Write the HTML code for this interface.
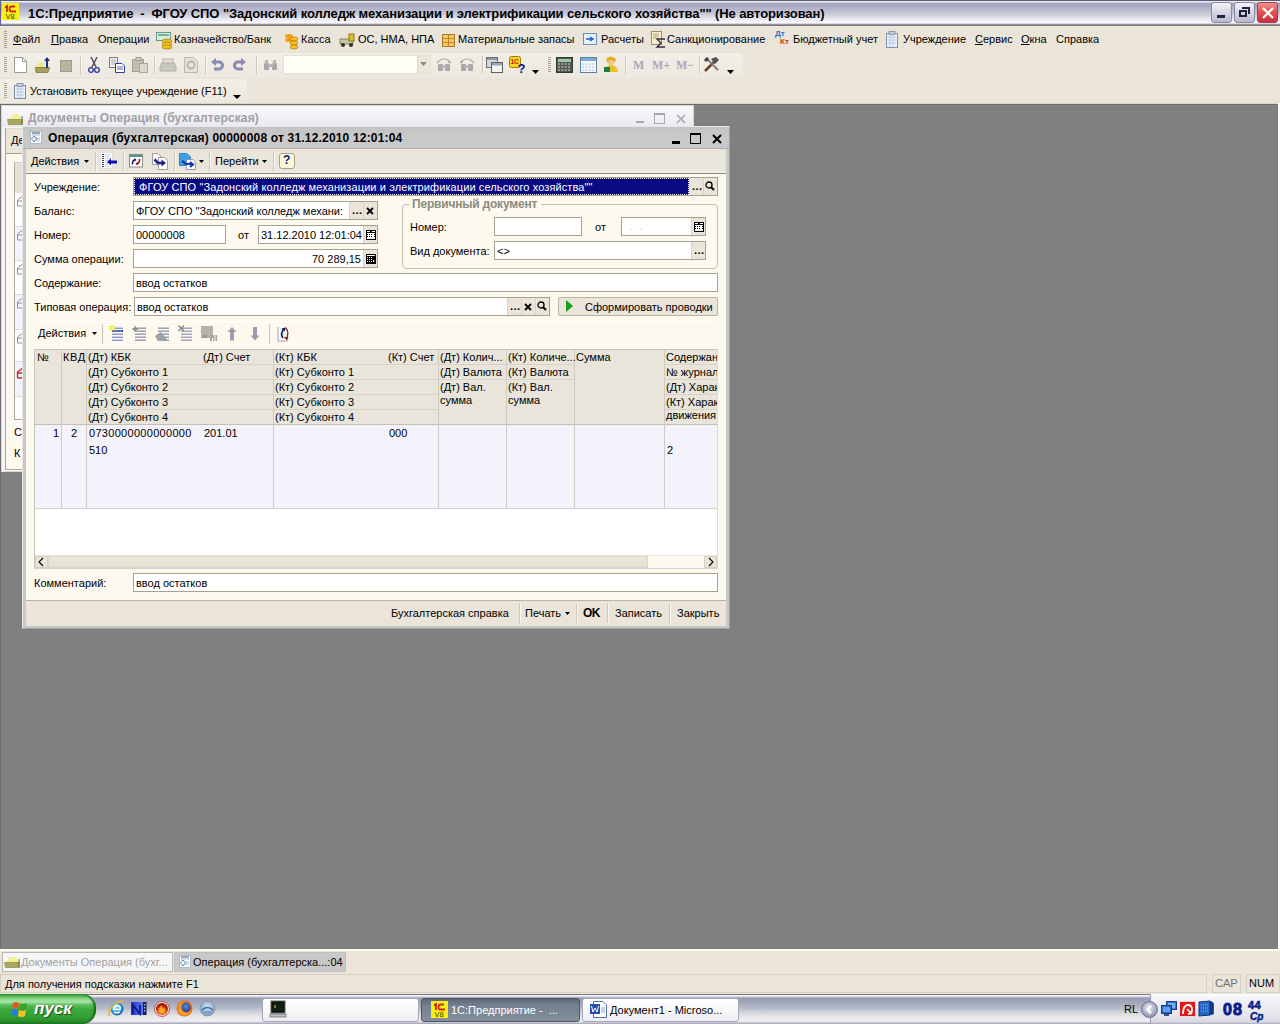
<!DOCTYPE html>
<html><head><meta charset="utf-8">
<style>
*{margin:0;padding:0;box-sizing:border-box}
html,body{width:1280px;height:1024px;overflow:hidden}
body{position:relative;background:#808080;font-family:"Liberation Sans",sans-serif;font-size:11px;color:#000}
.a{position:absolute}
.t{position:absolute;white-space:nowrap;line-height:13px}
svg{position:absolute;overflow:visible}
#tb{left:0;top:0;width:1280px;height:26px;background:linear-gradient(#5c5c6c 0px,#5c5c6c 1px,#ececf8 1px,#ececf8 2px,#a8a8c0 3px,#a6a6be 5px,#b2b2ca 8px,#bcbcd0 11px,#cacad6 14px,#dcdce6 17px,#e8e8f2 19px,#f0f0f8 21px,#fcfcff 22.5px,#dcd8e0 23.5px,#9894a0 24.5px,#747078 25px,#747078 26px)}
#chrome{left:0;top:26px;width:1280px;height:78px;background:#eae4d9}
.grip{position:absolute;width:3px;background:repeating-linear-gradient(#a8a494 0 1px,transparent 1px 2px)}
.sep{position:absolute;width:2px;border-left:1px solid #cdc9bd;border-right:1px solid #f8f6f2}
.u{text-decoration:underline}
.tbtn{position:absolute;width:21px;height:21px;border-radius:3px;border:1px solid #8a8aa0}
</style></head><body>
<!-- TITLE BAR -->
<div id="tb" class="a"></div>
<div class="a" style="left:0;top:0;width:1px;height:26px;background:#6060a0"></div>
<svg style="left:2px;top:3px" width="17" height="17"><rect x="0" y="0" width="17" height="17" fill="#f8ee18"/><path d="M3 4.5L5 3V9" stroke="#c82808" stroke-width="1.8" fill="none"/><path d="M13 3.5H9.5Q7.5 3.5 7.5 6Q7.5 8.5 9.5 8.5H14" stroke="#d82808" stroke-width="1.8" fill="none"/><text x="3.5" y="16" font-size="7.5" fill="#3a3808" font-family="Liberation Sans">V8</text></svg>
<div class="t" style="left:28px;top:6px;font-size:13px;font-weight:bold;line-height:15px;color:#000;letter-spacing:-0.1px">1С:Предприятие&nbsp; -&nbsp; ФГОУ СПО "Задонский колледж механизации и электрификации сельского хозяйства"" (Не авторизован)</div>
<div class="tbtn" style="left:1211px;top:2px;background:linear-gradient(#f4f4fa,#d0d0e0 60%,#b8b8cc)"></div>
<div class="a" style="left:1217px;top:15px;width:8px;height:3px;background:#22223a"></div>
<div class="tbtn" style="left:1234px;top:2px;background:linear-gradient(#f4f4fa,#d0d0e0 60%,#b8b8cc)"></div>
<div class="a" style="left:1239px;top:10px;width:8px;height:7px;border:2px solid #22223a;border-top-width:2px"></div>
<div class="a" style="left:1242px;top:7px;width:8px;height:7px;border-top:2px solid #22223a;border-right:2px solid #22223a"></div>
<div class="tbtn" style="left:1257px;top:2px;background:linear-gradient(#f09090,#e05050 50%,#c83040);border-color:#a04050"></div>
<svg style="left:1262px;top:7px" width="12" height="12"><path d="M1 1L11 11M11 1L1 11" stroke="#fff" stroke-width="2.2"/></svg>

<!-- CHROME -->
<div id="chrome" class="a"></div>
<div class="a" style="left:0;top:26px;width:1280px;height:1px;background:#f0ece6"></div>
<div class="a" style="left:0;top:53px;width:743px;height:25px;border-radius:0 4px 4px 0;background:linear-gradient(#f2efe8,#ece8df)"></div>
<div class="a" style="left:0;top:79px;width:247px;height:24px;border-radius:0 4px 4px 0;background:linear-gradient(#f2efe8,#ece8df)"></div>
<div class="grip" style="left:4px;top:31px;height:17px"></div>
<div class="grip" style="left:4px;top:57px;height:16px"></div>
<div class="grip" style="left:4px;top:83px;height:16px"></div>
<!-- menu -->
<div class="t" style="left:13px;top:33px"><span class="u">Ф</span>айл</div>
<div class="t" style="left:51px;top:33px"><span class="u">П</span>равка</div>
<div class="t" style="left:98px;top:33px">Операции</div>
<svg style="left:156px;top:31px" width="18" height="18"><rect x="0.5" y="1.5" width="14" height="8" fill="#d8ecd8" stroke="#6a9a8a"/><rect x="2" y="3" width="11" height="2" fill="#7ab0a0"/><ellipse cx="11" cy="10" rx="5" ry="2" fill="#f0c020" stroke="#a07010" stroke-width=".6"/><ellipse cx="11" cy="13" rx="5" ry="2" fill="#f0c020" stroke="#a07010" stroke-width=".6"/><ellipse cx="11" cy="16" rx="5" ry="2" fill="#f0c020" stroke="#a07010" stroke-width=".6"/></svg>
<div class="t" style="left:174px;top:33px">Казначейство/Банк</div>
<svg style="left:284px;top:31px" width="16" height="18"><ellipse cx="5" cy="5" rx="4" ry="2" fill="#f0a010"/><ellipse cx="5" cy="9" rx="4" ry="2" fill="#f0a010"/><ellipse cx="10" cy="8" rx="4" ry="2" fill="#f8c020" stroke="#a07010" stroke-width=".6"/><ellipse cx="10" cy="12" rx="4" ry="2" fill="#f8c020" stroke="#a07010" stroke-width=".6"/><ellipse cx="10" cy="16" rx="4" ry="2" fill="#f8c020" stroke="#a07010" stroke-width=".6"/></svg>
<div class="t" style="left:301px;top:33px">Касса</div>
<svg style="left:340px;top:33px" width="16" height="14"><rect x="0" y="6" width="13" height="5" fill="#c8c8a0" stroke="#707050" stroke-width=".8"/><rect x="9" y="1" width="5" height="7" fill="#e0c020" stroke="#806010" stroke-width=".8"/><circle cx="3" cy="12" r="2" fill="#303030"/><circle cx="11" cy="12" r="2" fill="#303030"/></svg>
<div class="t" style="left:358px;top:33px">ОС, НМА, НПА</div>
<svg style="left:442px;top:33px" width="14" height="14"><rect x="0.5" y="1.5" width="12" height="12" fill="#f8c868" stroke="#b07820"/><path d="M0.5 5.5H12.5M0.5 9.5H12.5M6.5 1.5V13.5" stroke="#b07820" stroke-width=".8"/></svg>
<div class="t" style="left:458px;top:33px">Материальные запасы</div>
<svg style="left:583px;top:32px" width="14" height="14"><rect x="0.5" y="1.5" width="13" height="11" fill="#e8f0f8" stroke="#7090b0"/><path d="M3 7H10M7 5L10 7L7 9" stroke="#2060c0" stroke-width="1.5" fill="none"/></svg>
<div class="t" style="left:601px;top:33px">Расчеты</div>
<svg style="left:651px;top:31px" width="16" height="17"><rect x="0.5" y="0.5" width="10" height="13" fill="#f8f0d0" stroke="#a09060"/><path d="M2 3H8M2 5H8M2 7H6" stroke="#a09060" stroke-width=".8"/><path d="M14 8H6L10 12L6 16H14" stroke="#303040" stroke-width="1.4" fill="none"/></svg>
<div class="t" style="left:667px;top:33px">Санкционирование</div>
<div class="t" style="left:775px;top:30px;font-size:8px;font-weight:bold;color:#2070d0;line-height:8px">Дт</div>
<div class="t" style="left:780px;top:38px;font-size:8px;font-weight:bold;color:#e03020;line-height:8px">Кт</div>
<div class="t" style="left:793px;top:33px">Бюджетный учет</div>
<svg style="left:886px;top:31px" width="13" height="17"><rect x="0.5" y="2.5" width="11" height="14" fill="#e8eef8" stroke="#8090a8"/><rect x="3" y="0.5" width="6" height="3" fill="#c0c8d8" stroke="#8090a8" stroke-width=".8"/><path d="M2 6H10M2 9H10M2 12H10M4 4V16M7 4V16" stroke="#a8b8d0" stroke-width=".6"/></svg>
<div class="t" style="left:903px;top:33px">Учреждение</div>
<div class="t" style="left:975px;top:33px"><span class="u">С</span>ервис</div>
<div class="t" style="left:1021px;top:33px"><span class="u">О</span>кна</div>
<div class="t" style="left:1056px;top:33px">Справка</div>

<!-- TOOLBAR 2 -->
<svg style="left:14px;top:57px" width="13" height="16"><path d="M0.5 0.5H8.5L12.5 4.5V15.5H0.5Z" fill="#fff" stroke="#9a9a9a"/><path d="M8.5 0.5V4.5H12.5" fill="none" stroke="#9a9a9a"/></svg>
<svg style="left:35px;top:56px" width="17" height="17"><path d="M1 10L4 6H9L9 16H1Z" fill="#f0e890"/><path d="M0.5 11.5H14.5L13 16.5H1Z" fill="#a8a058" stroke="#707030" stroke-width=".7"/><path d="M12 2V12" stroke="#203080" stroke-width="2"/><path d="M9 5L12 1L15 5Z" fill="#203080"/></svg>
<div class="a" style="left:60px;top:60px;width:12px;height:12px;background:#b8b4a0;border:1px solid #a09c88"></div>
<div class="sep" style="left:80px;top:56px;height:18px"></div>
<svg style="left:88px;top:57px" width="12" height="16"><path d="M3 0L8 10M9 0L4 10" stroke="#505060" stroke-width="1.5"/><circle cx="3" cy="13" r="2.3" fill="none" stroke="#2838a0" stroke-width="1.3"/><circle cx="9" cy="13" r="2.3" fill="none" stroke="#2838a0" stroke-width="1.3"/></svg>
<svg style="left:109px;top:57px" width="17" height="16"><path d="M0.5 0.5H8.5V10.5H0.5Z" fill="#f4f4f4" stroke="#7a7a7a"/><path d="M2 3H7M2 5H7M2 7H7" stroke="#9a9a9a" stroke-width=".8"/><path d="M6.5 6.5H13L15.5 9V15.5H6.5Z" fill="#fff" stroke="#3040a0"/><path d="M8 10H14M8 12H14" stroke="#3040a0" stroke-width=".8"/></svg>
<svg style="left:132px;top:57px" width="17" height="16"><rect x="0.5" y="2.5" width="11" height="12" fill="#c0c0b0" stroke="#a0a090"/><rect x="4" y="0.5" width="5" height="3" fill="#d0d0c0" stroke="#a0a090"/><rect x="7.5" y="6.5" width="8" height="9" fill="#d8d8cc" stroke="#a8a898"/></svg>
<div class="sep" style="left:154px;top:56px;height:18px"></div>
<svg style="left:159px;top:58px" width="18" height="14"><path d="M3 5H15L17 9V13H1V9Z" fill="#c8c8c0" stroke="#b0b0a8"/><rect x="4" y="1" width="10" height="4" fill="#e0e0d8" stroke="#b8b8b0"/></svg>
<svg style="left:184px;top:57px" width="14" height="16"><path d="M0.5 0.5H9.5L13.5 4.5V15.5H0.5Z" fill="#e4e4dc" stroke="#b8b8b0"/><circle cx="7" cy="8" r="3.5" fill="none" stroke="#a8a8a0" stroke-width="1.4"/></svg>
<div class="sep" style="left:205px;top:56px;height:18px"></div>
<svg style="left:211px;top:58px" width="13" height="14"><path d="M5 0L0 4L5 8Z" fill="#8a8cb0"/><path d="M3 4H8A3.5 3.5 0 0 1 8 11H3" fill="none" stroke="#8a8cb0" stroke-width="3"/></svg>
<svg style="left:233px;top:58px" width="13" height="14"><path d="M8 0L13 4L8 8Z" fill="#8a8cb0"/><path d="M10 4H5A3.5 3.5 0 0 0 5 11H10" fill="none" stroke="#8a8cb0" stroke-width="3"/></svg>
<div class="sep" style="left:256px;top:56px;height:18px"></div>
<svg style="left:264px;top:60px" width="13" height="10"><rect x="0" y="3" width="5" height="7" rx="1" fill="#a8a8a8"/><rect x="8" y="3" width="5" height="7" rx="1" fill="#a8a8a8"/><rect x="4" y="4" width="5" height="3" fill="#b8b8b8"/><rect x="1" y="0" width="3" height="4" fill="#b8b8b8"/><rect x="9" y="0" width="3" height="4" fill="#b8b8b8"/></svg>
<div class="a" style="left:283px;top:55px;width:148px;height:19px;background:#fefdf6;border:1px solid #e4e1d2"></div>
<div class="a" style="left:417px;top:56px;width:13px;height:17px;background:#ebe8da;border-left:1px solid #e0ddd0"></div>
<svg style="left:420px;top:62px" width="7" height="4"><path d="M0 0H7L3.5 4Z" fill="#8c8c8c"/></svg>
<svg style="left:436px;top:57px" width="16" height="15"><path d="M1 6Q8 -2 15 6" fill="none" stroke="#a8a8a8" stroke-width="1.2"/><path d="M13 3L15 6L12 6" fill="#a8a8a8"/><rect x="2" y="7" width="5" height="7" rx="1" fill="#a8a8a8"/><rect x="9" y="7" width="5" height="7" rx="1" fill="#a8a8a8"/><rect x="6" y="8" width="4" height="3" fill="#b8b8b8"/></svg>
<svg style="left:459px;top:57px" width="16" height="15"><path d="M1 6Q8 -2 15 6" fill="none" stroke="#a8a8a8" stroke-width="1.2"/><path d="M3 3L1 6L4 6" fill="#a8a8a8"/><rect x="2" y="7" width="5" height="7" rx="1" fill="#a8a8a8"/><rect x="9" y="7" width="5" height="7" rx="1" fill="#a8a8a8"/><rect x="6" y="8" width="4" height="3" fill="#b8b8b8"/></svg>
<div class="sep" style="left:482px;top:56px;height:18px"></div>
<svg style="left:486px;top:57px" width="18" height="16"><rect x="0.5" y="0.5" width="11" height="10" fill="#d8d8d8" stroke="#707070"/><rect x="1" y="1" width="10" height="2" fill="#8898a8"/><rect x="5.5" y="5.5" width="11" height="10" fill="#f4f4f4" stroke="#606060"/><rect x="6" y="6" width="10" height="2.5" fill="#98a8b8"/></svg>
<svg style="left:509px;top:56px" width="18" height="17"><rect x="0.5" y="0.5" width="11" height="11" rx="2" fill="#f8d820" stroke="#a07808"/><text x="1.5" y="8" font-size="6.5" font-weight="bold" fill="#c01808" font-family="Liberation Sans">1C</text><text x="8.5" y="16.5" font-size="13" font-weight="bold" fill="#0a1490" font-family="Liberation Sans">?</text></svg>
<svg style="left:532px;top:70px" width="7" height="4"><path d="M0 0H7L3.5 4Z" fill="#000"/></svg>
<div class="a" style="left:548px;top:57px;width:3px;height:15px;background:repeating-linear-gradient(#a8a494 0 1px,transparent 1px 2px)"></div>
<svg style="left:556px;top:57px" width="17" height="16"><rect x="0.5" y="0.5" width="16" height="15" fill="#505850" stroke="#303830"/><rect x="2" y="2" width="13" height="3" fill="#a0c8a0"/><path d="M2 7H15M2 10H15M2 13H15" stroke="#b0b0b0" stroke-width="1.5" stroke-dasharray="2 1.3"/></svg>
<svg style="left:580px;top:57px" width="17" height="16"><rect x="0.5" y="0.5" width="16" height="15" fill="#f4f8fc" stroke="#6080a0"/><rect x="1" y="1" width="15" height="3" fill="#80a8d0"/><path d="M2 7H15M2 10H15M2 13H15" stroke="#a8c0d8" stroke-width="1" stroke-dasharray="2 1.3"/></svg>
<svg style="left:603px;top:56px" width="16" height="17"><circle cx="8" cy="5" r="4" fill="#f0c890"/><path d="M3 3Q8 -2 13 3L12 6Q8 2 4 6Z" fill="#e0b020"/><path d="M1 16Q2 9 8 9Q14 9 15 16Z" fill="#e8c028"/><rect x="1" y="11" width="6" height="5" fill="#208040"/></svg>
<div class="sep" style="left:625px;top:56px;height:18px"></div>
<div class="t" style="left:633px;top:59px;font-family:'Liberation Serif',serif;font-weight:bold;font-size:12px;color:#a8a8b8">M</div>
<div class="t" style="left:652px;top:59px;font-family:'Liberation Serif',serif;font-weight:bold;font-size:12px;color:#a8a8b8">M+</div>
<div class="t" style="left:676px;top:59px;font-family:'Liberation Serif',serif;font-weight:bold;font-size:12px;color:#a8a8b8">M−</div>
<div class="sep" style="left:699px;top:56px;height:18px"></div>
<svg style="left:703px;top:56px" width="18" height="17"><path d="M2 15L11 6" stroke="#704020" stroke-width="2.5"/><path d="M8 3L13 1L16 4L12 8Z" fill="#505050"/><path d="M3 2L15 14" stroke="#808080" stroke-width="2"/><path d="M1 4L4 1L6 3L3 6Z" fill="#404040"/></svg>
<svg style="left:727px;top:70px" width="7" height="4"><path d="M0 0H7L3.5 4Z" fill="#000"/></svg>
<!-- TOOLBAR 3 -->
<svg style="left:14px;top:83px" width="12" height="16"><rect x="0.5" y="2.5" width="11" height="13" fill="#eef2fa" stroke="#7888a0"/><rect x="3" y="0.5" width="6" height="3" fill="#c8d0e0" stroke="#7888a0" stroke-width=".8"/><path d="M2 6H10M2 9H10M2 12H10M4 4V15M7 4V15" stroke="#a8b8d8" stroke-width=".7"/></svg>
<div class="t" style="left:30px;top:85px">Установить текущее учреждение (F11)</div>
<svg style="left:233px;top:95px" width="8" height="4"><path d="M0 0H8L4 4Z" fill="#000"/></svg>
<!-- MDI border -->
<div class="a" style="left:0;top:103px;width:1280px;height:1px;background:#d8d4c8"></div>
<div class="a" style="left:0;top:104px;width:1278px;height:1px;background:#6c6c64"></div>
<div class="a" style="left:0;top:105px;width:1278px;height:1px;background:#86867e"></div>
<div class="a" style="left:0;top:104px;width:1px;height:845px;background:#6c6c6c"></div>
<div class="a" style="left:1278px;top:103px;width:2px;height:848px;background:#fff"></div>

<!-- BACKGROUND WINDOW -->
<div class="a" style="left:1px;top:105px;width:693px;height:367px;background:#fdf9ef;border:1px solid #d8d8d8"></div>
<div class="a" style="left:2px;top:106px;width:691px;height:21px;background:linear-gradient(#f8f8fc,#f0f0f6 60%,#e8e8f0)"></div>
<svg style="left:7px;top:112px" width="16" height="13"><path d="M1 8L6 2H12L15 8Z" fill="#f0f098"/><path d="M0.5 7.5H15.5V12.5H1.5Z" fill="#a8a860" stroke="#808040" stroke-width=".6"/><path d="M15 4V12" stroke="#707030" stroke-width="1"/></svg>
<div class="t" style="left:28px;top:112px;font-weight:bold;font-size:12px;color:#a0a0a0;letter-spacing:0.1px">Документы Операция (бухгалтерская)</div>
<div class="a" style="left:636px;top:121px;width:8px;height:2px;background:#a8a8a8"></div>
<div class="a" style="left:654px;top:113px;width:11px;height:11px;border:1px solid #a8a8a8;border-top-width:2px"></div>
<svg style="left:676px;top:114px" width="10" height="10"><path d="M1 1L9 9M9 1L1 9" stroke="#a8a8a8" stroke-width="1.6"/></svg>
<div class="a" style="left:5px;top:128px;width:18px;height:26px;background:#eae4d9;border-top:1px solid #dcd8cc;border-bottom:1px solid #a8a494"></div>
<div class="t" style="left:11px;top:134px">Де</div>
<div class="a" style="left:2px;top:127px;width:3px;height:345px;background:#f4f4f4"></div>
<div class="a" style="left:5px;top:128px;width:1px;height:342px;background:#a8a8a0"></div>
<div class="a" style="left:5px;top:469px;width:18px;height:1px;background:#a8a8a0"></div>
<div class="a" style="left:14px;top:162px;width:10px;height:258px;background:#fff;border-left:1px solid #a8a8a0;border-bottom:1px solid #a8a8a0;border-top:1px solid #d0d0d0"></div>
<div class="a" style="left:15px;top:163px;width:9px;height:30px;background:#e6e1d6"></div>
<div class="a" style="left:15px;top:226px;width:9px;height:34px;background:#f4f2fc"></div>
<div class="a" style="left:15px;top:294px;width:9px;height:35px;background:#f4f2fc"></div>
<div class="a" style="left:15px;top:361px;width:9px;height:35px;background:#f4f2fc"></div>
<div class="a" style="left:15px;top:226px;width:9px;height:1px;background:#d8d8d8"></div>
<div class="a" style="left:15px;top:260px;width:9px;height:1px;background:#d8d8d8"></div>
<div class="a" style="left:15px;top:294px;width:9px;height:1px;background:#d8d8d8"></div>
<div class="a" style="left:15px;top:329px;width:9px;height:1px;background:#d8d8d8"></div>
<div class="a" style="left:15px;top:361px;width:9px;height:1px;background:#d8d8d8"></div>
<div class="a" style="left:15px;top:396px;width:9px;height:1px;background:#d8d8d8"></div>
<svg style="left:17px;top:196px" width="6" height="200"><g fill="none" stroke="#909090" stroke-width="1"><path d="M0.5 10V4L5 0.5M0.5 10H6M0.5 5H5"/><path transform="translate(0,34)" d="M0.5 10V4L5 0.5M0.5 10H6M0.5 5H5"/><path transform="translate(0,68)" d="M0.5 10V4L5 0.5M0.5 10H6M0.5 5H5"/><path transform="translate(0,102)" d="M0.5 10V4L5 0.5M0.5 10H6M0.5 5H5"/><path transform="translate(0,137)" d="M0.5 10V4L5 0.5M0.5 10H6M0.5 5H5"/></g><path transform="translate(0,172)" d="M0.5 10V4L5 0.5M0.5 10H6M0.5 5H5" fill="none" stroke="#d02020" stroke-width="1.3"/></svg>
<div class="t" style="left:14px;top:426px">С</div>
<div class="t" style="left:14px;top:447px">К</div>

<!-- FRONT WINDOW -->
<div class="a" style="left:22px;top:126px;width:708px;height:503px;background:#c8c8c8;border:1px solid #e8e8e8;border-right-color:#a0a0a0;border-bottom-color:#a0a0a0"></div>
<div class="a" style="left:23px;top:127px;width:706px;height:22px;background:linear-gradient(#c4c4c4,#cacaca 50%,#c8c8cc 95%,#b0aca8 95%)"></div>
<svg style="left:30px;top:131px" width="12" height="13"><rect x="0.5" y="0.5" width="11" height="12" fill="#f8fbff" stroke="#90a0b0" stroke-width=".6"/><path d="M2 2H10" stroke="#305878" stroke-width="1"/><path d="M2 4H10M6 7H10M6 9H10" stroke="#8aa0b8" stroke-width=".7"/><path d="M4 5L6.5 8L4 11L1.5 8Z" fill="none" stroke="#406890" stroke-width=".8"/></svg>
<div class="t" style="left:48px;top:132px;font-weight:bold;font-size:12px;letter-spacing:0.18px">Операция (бухгалтерская) 00000008 от 31.12.2010 12:01:04</div>
<div class="a" style="left:672px;top:141px;width:8px;height:3px;background:#000"></div>
<div class="a" style="left:690px;top:133px;width:11px;height:11px;border:1px solid #000;border-top-width:2px"></div>
<svg style="left:712px;top:134px" width="10" height="10"><path d="M1 1L9 9M9 1L1 9" stroke="#000" stroke-width="2"/></svg>
<!-- toolbar band -->
<div class="a" style="left:26px;top:149px;width:700px;height:25px;background:linear-gradient(#eae5da 88%,#f0ece4 88%,#f0ece4 96%,#8c8880 96%)"></div>
<!-- form area -->
<div class="a" style="left:26px;top:174px;width:700px;height:427px;background:#fdf9ef"></div>
<!-- bottom bar -->
<div class="a" style="left:26px;top:600px;width:700px;height:26px;background:#eae4d9;border-top:1px solid #b8b4a4"></div>

<!-- form toolbar -->
<div class="t" style="left:31px;top:155px">Действия</div>
<svg style="left:84px;top:160px" width="5" height="3"><path d="M0 0H5L2.5 3Z" fill="#000"/></svg>
<div class="sep" style="left:95px;top:152px;height:19px"></div>
<svg style="left:100px;top:152px" width="18" height="17"><rect x="0.5" y="0.5" width="12" height="16" fill="#fff" stroke="#d8dce4" stroke-width=".8"/><path d="M2 2.5H4M2 4.5H4M2 6.5H4M2 8.5H4M2 10.5H4M2 12.5H4M2 14.5H4" stroke="#303860" stroke-width="1"/><path d="M5 2.5H11M5 4.5H10M5 6.5H11M5 8.5H9M5 10.5H8M5 12.5H8M5 14.5H10" stroke="#c0c8e0" stroke-width=".8"/><path d="M7 10L11 6.5V8.5H17V11.5H11V13.5Z" fill="#1010a8"/></svg>
<div class="sep" style="left:123px;top:152px;height:19px"></div>
<svg style="left:129px;top:154px" width="15" height="14"><rect x="0.5" y="0.5" width="13" height="12.5" fill="#fff" stroke="#808080" stroke-width=".9"/><rect x="1" y="1" width="12" height="2" fill="#4a9a88"/><path d="M3.5 10.5Q3 6 7 5.5" stroke="#10206a" stroke-width="1.6" fill="none"/><path d="M5 4.5L7.5 5.5L5.5 7.5Z" fill="#10206a"/><path d="M10.5 5Q11 9.5 7 10" stroke="#901818" stroke-width="1.6" fill="none"/><path d="M9 11L6.5 10L8.5 8Z" fill="#901818"/></svg>
<svg style="left:152px;top:153px" width="17" height="17"><path d="M0.5 0.5H6L8.5 3V11.5H0.5Z" fill="#f8f8f8" stroke="#8a8a8a" stroke-width=".8"/><path d="M6.5 4.5H12.5L15.5 7.5V16.5H6.5Z" fill="#fff" stroke="#8a8a8a" stroke-width=".8"/><path d="M2.5 6.5L6 10H10.5" stroke="#20208a" stroke-width="2.6" fill="none"/><path d="M9.5 6.5L14 10L9.5 13.5Z" fill="#20208a"/></svg>
<div class="sep" style="left:174px;top:152px;height:19px"></div>
<svg style="left:179px;top:153px" width="18" height="17"><path d="M0.5 0.5H8L11.5 4V12.5H0.5Z" fill="#3ca0e4" stroke="#2070b8" stroke-width=".8"/><path d="M7.5 6.5H14L16.5 9V16.5H7.5Z" fill="#fff" stroke="#7a88a8" stroke-width=".8"/><path d="M3 8L7 11H13M11 9L14 11.5L11 14" stroke="#1838b8" stroke-width="2.2" fill="none"/></svg>
<svg style="left:199px;top:160px" width="5" height="3"><path d="M0 0H5L2.5 3Z" fill="#000"/></svg>
<div class="sep" style="left:209px;top:152px;height:19px"></div>
<div class="t" style="left:215px;top:155px">Перейти</div>
<svg style="left:262px;top:160px" width="5" height="3"><path d="M0 0H5L2.5 3Z" fill="#000"/></svg>
<div class="sep" style="left:273px;top:152px;height:19px"></div>
<div class="a" style="left:279px;top:153px;width:16px;height:16px;background:#fbf8d8;border:1px solid #a8a488;border-radius:3px"></div>
<div class="t" style="left:283px;top:154px;font-weight:bold;font-size:12px;color:#102080">?</div>

<!-- fields -->
<div class="t" style="left:34px;top:181px">Учреждение:</div>
<div class="t" style="left:34px;top:205px">Баланс:</div>
<div class="t" style="left:34px;top:229px">Номер:</div>
<div class="t" style="left:34px;top:253px">Сумма операции:</div>
<div class="t" style="left:34px;top:277px">Содержание:</div>
<div class="t" style="left:34px;top:301px">Типовая операция:</div>
<div class="t" style="left:34px;top:577px">Комментарий:</div>

<!-- Учреждение -->
<div class="a" style="left:133px;top:177px;width:585px;height:19px;background:#fff;border:1px solid #a5a290"></div>
<div class="a" style="left:134px;top:178px;width:555px;height:17px;background:#0a0a84;outline:1px dotted #fff;outline-offset:-1px"></div>
<div class="t" style="left:139px;top:181px;color:#fff;letter-spacing:0.1px">ФГОУ СПО "Задонский колледж механизации и электрификации сельского хозяйства""</div>
<div class="a" style="left:689px;top:178px;width:14px;height:17px;background:#eae4d9;border-left:1px solid #e0ddd0"></div>
<div class="t" style="left:692px;top:180px;font-weight:bold;letter-spacing:0.5px">...</div>
<div class="a" style="left:703px;top:178px;width:14px;height:17px;background:#eae4d9;border-left:1px solid #d8d5c8"></div>
<svg style="left:705px;top:181px" width="10" height="10"><circle cx="4" cy="4" r="3" fill="none" stroke="#000" stroke-width="1.3"/><path d="M6 6L9 9" stroke="#000" stroke-width="2"/></svg>

<!-- Баланс -->
<div class="a" style="left:133px;top:201px;width:245px;height:19px;background:#fff;border:1px solid #a5a290"></div>
<div class="a" style="left:135px;top:203px;width:213px;height:15px;overflow:hidden"><div class="t" style="left:1px;top:2px">ФГОУ СПО "Задонский колледж механи:</div></div>
<div class="a" style="left:349px;top:202px;width:14px;height:17px;background:#eae4d9;border-left:1px solid #d8d5c8"></div>
<div class="t" style="left:352px;top:204px;font-weight:bold;letter-spacing:0.5px">...</div>
<div class="a" style="left:363px;top:202px;width:14px;height:17px;background:#eae4d9;border-left:1px solid #d8d5c8"></div>
<svg style="left:366px;top:207px" width="8" height="8"><path d="M1 1L7 7M7 1L1 7" stroke="#000" stroke-width="1.8"/></svg>

<!-- Номер -->
<div class="a" style="left:133px;top:225px;width:93px;height:19px;background:#fff;border:1px solid #a5a290"></div>
<div class="t" style="left:136px;top:229px">00000008</div>
<div class="t" style="left:238px;top:229px">от</div>
<div class="a" style="left:258px;top:225px;width:120px;height:19px;background:#fff;border:1px solid #a5a290"></div>
<div class="t" style="left:261px;top:229px">31.12.2010 12:01:04</div>
<div class="a" style="left:363px;top:226px;width:14px;height:17px;background:#eae4d9;border-left:1px solid #d8d5c8"></div>
<svg style="left:366px;top:230px" width="10" height="10"><rect x="0" y="0" width="10" height="10" fill="#000"/><rect x="1" y="1" width="8" height="8" fill="#000"/><rect x="1" y="1" width="3" height="1" fill="#fff"/><rect x="6" y="1" width="3" height="1" fill="#fff"/><rect x="1" y="3" width="8" height="6" fill="#fff"/><rect x="3" y="4" width="1" height="1" fill="#000"/><rect x="5" y="4" width="1" height="1" fill="#000"/><rect x="3" y="6" width="1" height="1" fill="#000"/><rect x="5" y="6" width="1" height="1" fill="#000"/><rect x="0" y="4" width="2" height="1" fill="#000"/><rect x="8" y="4" width="2" height="1" fill="#000"/><rect x="0" y="6" width="2" height="1" fill="#000"/><rect x="8" y="6" width="2" height="1" fill="#000"/></svg>

<!-- Сумма -->
<div class="a" style="left:133px;top:249px;width:245px;height:19px;background:#fff;border:1px solid #a5a290"></div>
<div class="t" style="left:312px;top:253px">70 289,15</div>
<div class="a" style="left:363px;top:250px;width:14px;height:17px;background:#eae4d9;border-left:1px solid #d8d5c8"></div>
<svg style="left:366px;top:254px" width="10" height="10"><rect x="0" y="0" width="10" height="10" fill="#000"/><rect x="1" y="1" width="8" height="1" fill="#fff"/><rect x="1" y="3" width="1" height="1" fill="#fff"/><rect x="1" y="5" width="1" height="1" fill="#fff"/><rect x="1" y="7" width="1" height="1" fill="#fff"/><rect x="3" y="3" width="1" height="1" fill="#fff"/><rect x="3" y="5" width="1" height="1" fill="#fff"/><rect x="3" y="7" width="1" height="1" fill="#fff"/><rect x="5" y="3" width="1" height="1" fill="#fff"/><rect x="5" y="5" width="1" height="1" fill="#fff"/><rect x="5" y="7" width="1" height="1" fill="#fff"/><rect x="7" y="6" width="1.2" height="2" rx=".5" fill="#fff"/></svg>

<!-- Первичный документ group -->
<div class="a" style="left:402px;top:204px;width:316px;height:65px;border:1px solid #c4c0ac;border-radius:4px"></div>
<div class="a" style="left:409px;top:197px;width:132px;height:14px;background:#fdf9ef"></div>
<div class="t" style="left:412px;top:198px;font-weight:bold;font-size:12px;letter-spacing:-0.2px;color:#8c8c80">Первичный документ</div>
<div class="t" style="left:410px;top:221px">Номер:</div>
<div class="a" style="left:494px;top:217px;width:88px;height:19px;background:#fff;border:1px solid #a5a290"></div>
<div class="t" style="left:595px;top:221px">от</div>
<div class="a" style="left:621px;top:217px;width:85px;height:19px;background:#fff;border:1px solid #a5a290"></div>
<div class="t" style="left:630px;top:220px;color:#c8c8c8">.&nbsp; .</div>
<div class="a" style="left:691px;top:218px;width:14px;height:17px;background:#eae4d9;border-left:1px solid #d8d5c8"></div>
<svg style="left:694px;top:222px" width="10" height="10"><rect x="0" y="0" width="10" height="10" fill="#000"/><rect x="1" y="1" width="8" height="8" fill="#000"/><rect x="1" y="1" width="3" height="1" fill="#fff"/><rect x="6" y="1" width="3" height="1" fill="#fff"/><rect x="1" y="3" width="8" height="6" fill="#fff"/><rect x="3" y="4" width="1" height="1" fill="#000"/><rect x="5" y="4" width="1" height="1" fill="#000"/><rect x="3" y="6" width="1" height="1" fill="#000"/><rect x="5" y="6" width="1" height="1" fill="#000"/><rect x="0" y="4" width="2" height="1" fill="#000"/><rect x="8" y="4" width="2" height="1" fill="#000"/><rect x="0" y="6" width="2" height="1" fill="#000"/><rect x="8" y="6" width="2" height="1" fill="#000"/></svg>
<div class="t" style="left:410px;top:245px">Вид документа:</div>
<div class="a" style="left:494px;top:241px;width:212px;height:19px;background:#fff;border:1px solid #a5a290"></div>
<div class="t" style="left:497px;top:245px">&lt;&gt;</div>
<div class="a" style="left:691px;top:242px;width:14px;height:17px;background:#eae4d9;border-left:1px solid #d8d5c8"></div>
<div class="t" style="left:694px;top:244px;font-weight:bold;letter-spacing:0.5px">...</div>

<!-- Содержание -->
<div class="a" style="left:133px;top:273px;width:585px;height:19px;background:#fff;border:1px solid #a5a290"></div>
<div class="t" style="left:136px;top:277px">ввод остатков</div>
<!-- Типовая операция -->
<div class="a" style="left:134px;top:297px;width:416px;height:19px;background:#fff;border:1px solid #a5a290"></div>
<div class="t" style="left:137px;top:301px">ввод остатков</div>
<div class="a" style="left:507px;top:298px;width:14px;height:17px;background:#eae4d9;border-left:1px solid #d8d5c8"></div>
<div class="t" style="left:510px;top:300px;font-weight:bold;letter-spacing:0.5px">...</div>
<div class="a" style="left:521px;top:298px;width:14px;height:17px;background:#eae4d9;border-left:1px solid #d8d5c8"></div>
<svg style="left:524px;top:303px" width="8" height="8"><path d="M1 1L7 7M7 1L1 7" stroke="#000" stroke-width="1.8"/></svg>
<div class="a" style="left:535px;top:298px;width:14px;height:17px;background:#eae4d9;border-left:1px solid #d8d5c8"></div>
<svg style="left:537px;top:301px" width="10" height="10"><circle cx="4" cy="4" r="3" fill="none" stroke="#000" stroke-width="1.3"/><path d="M6 6L9 9" stroke="#000" stroke-width="2"/></svg>
<div class="a" style="left:558px;top:297px;width:160px;height:19px;background:#eae4d9;border:1px solid #b8b4a0;border-radius:2px"></div>
<svg style="left:566px;top:300px" width="7" height="12"><path d="M0 0L7 6L0 12Z" fill="#10a020"/></svg>
<div class="t" style="left:585px;top:301px">Сформировать проводки</div>
<div class="a" style="left:34px;top:321px;width:684px;height:1px;background:#b8b4a4;border-bottom:1px solid #fff"></div>

<!-- table toolbar -->
<div class="t" style="left:38px;top:327px">Действия</div>
<svg style="left:92px;top:332px" width="5" height="3"><path d="M0 0H5L2.5 3Z" fill="#000"/></svg>
<div class="sep" style="left:102px;top:324px;height:20px"></div>
<svg style="left:109px;top:325px" width="17" height="17"><rect x="3" y="2" width="11" height="1" fill="#c8d0f0"/><rect x="3" y="3" width="11" height="1" fill="#9098c8"/><rect x="3" y="5" width="11" height="1" fill="#c8d0f0"/><rect x="3" y="6" width="11" height="1" fill="#9098c8"/><rect x="3" y="8" width="11" height="1" fill="#c8d0f0"/><rect x="3" y="9" width="11" height="1" fill="#9098c8"/><rect x="3" y="11" width="11" height="1" fill="#c8d0f0"/><rect x="3" y="12" width="11" height="1" fill="#9098c8"/><rect x="3" y="14" width="11" height="1" fill="#c8d0f0"/><rect x="3" y="15" width="11" height="1" fill="#9098c8"/><rect x="3" y="5" width="11" height="2" fill="#2a3a80"/><rect x="4" y="5.5" width="9" height="1" fill="#90a8d8"/><circle cx="3" cy="3" r="2.8" fill="#f8e830"/><circle cx="3" cy="3" r="1.3" fill="#fffbb0"/></svg>
<svg style="left:132px;top:325px" width="17" height="17"><rect x="3" y="2" width="11" height="1" fill="#c8c8d4"/><rect x="3" y="3" width="11" height="1" fill="#a4a4b0"/><rect x="3" y="5" width="11" height="1" fill="#c8c8d4"/><rect x="3" y="6" width="11" height="1" fill="#a4a4b0"/><rect x="3" y="8" width="11" height="1" fill="#c8c8d4"/><rect x="3" y="9" width="11" height="1" fill="#a4a4b0"/><rect x="3" y="11" width="11" height="1" fill="#c8c8d4"/><rect x="3" y="12" width="11" height="1" fill="#a4a4b0"/><rect x="3" y="14" width="11" height="1" fill="#c8c8d4"/><rect x="3" y="15" width="11" height="1" fill="#a4a4b0"/><path d="M0.5 4H6M3.2 1.2V6.8" stroke="#8c9494" stroke-width="1.8"/></svg>
<svg style="left:155px;top:325px" width="17" height="17"><rect x="3" y="2" width="11" height="1" fill="#c8c8d4"/><rect x="3" y="3" width="11" height="1" fill="#a4a4b0"/><rect x="3" y="5" width="11" height="1" fill="#c8c8d4"/><rect x="3" y="6" width="11" height="1" fill="#a4a4b0"/><rect x="3" y="8" width="11" height="1" fill="#c8c8d4"/><rect x="3" y="9" width="11" height="1" fill="#a4a4b0"/><rect x="3" y="11" width="11" height="1" fill="#c8c8d4"/><rect x="3" y="12" width="11" height="1" fill="#a4a4b0"/><rect x="3" y="14" width="11" height="1" fill="#c8c8d4"/><rect x="3" y="15" width="11" height="1" fill="#a4a4b0"/><path d="M0 11L6 7L13 16H3Z" fill="#98a4a4"/></svg>
<svg style="left:178px;top:325px" width="17" height="17"><rect x="3" y="2" width="11" height="1" fill="#ccccdc"/><rect x="3" y="3" width="11" height="1" fill="#a8a8bc"/><rect x="3" y="5" width="11" height="1" fill="#ccccdc"/><rect x="3" y="6" width="11" height="1" fill="#a8a8bc"/><rect x="3" y="8" width="11" height="1" fill="#ccccdc"/><rect x="3" y="9" width="11" height="1" fill="#a8a8bc"/><rect x="3" y="11" width="11" height="1" fill="#ccccdc"/><rect x="3" y="12" width="11" height="1" fill="#a8a8bc"/><rect x="3" y="14" width="11" height="1" fill="#ccccdc"/><rect x="3" y="15" width="11" height="1" fill="#a8a8bc"/><path d="M0.5 0.5L6 6M6 0.5L0.5 6" stroke="#8c8c8c" stroke-width="1.5"/></svg>
<svg style="left:201px;top:326px" width="17" height="16"><rect x="0" y="0" width="12" height="12" fill="#b4b0a8"/><path d="M0 4H12M0 8H12M4 0V12M8 0V12" stroke="#c0bcb4" stroke-width=".6"/><rect x="2" y="9" width="4" height="3" fill="#9c9890"/><rect x="9" y="9" width="2" height="6" fill="#a8a49c"/><rect x="12" y="9" width="1.5" height="6" fill="#a8a49c"/><rect x="14.5" y="9" width="1.5" height="6" fill="#a8a49c"/></svg>
<svg style="left:227px;top:327px" width="10" height="14"><path d="M5 0L9.5 5H7V13.5H3V5H0.5Z" fill="#9c9cac"/></svg>
<svg style="left:250px;top:327px" width="10" height="14"><path d="M5 13.5L9.5 8.5H7V0H3V8.5H0.5Z" fill="#9c9cac"/></svg>
<div class="sep" style="left:269px;top:324px;height:20px"></div>
<svg style="left:276px;top:326px" width="17" height="16"><path d="M2 1.5V14" stroke="#5878c0" stroke-width="1.3" stroke-dasharray="1 1"/><path d="M4 3.5H10M4 6H10M4 8.5H10M4 11H10" stroke="#c8d8e8" stroke-width=".8"/><path d="M1 15H12" stroke="#909090" stroke-width=".8"/><path d="M7 12Q4 8 7.5 3.5" stroke="#101a60" stroke-width="1.6" fill="none"/><path d="M5.5 2.5L9.5 1.5L8.5 5.5Z" fill="#101a60"/><path d="M9.5 1.5Q14 7 10 13" stroke="#802020" stroke-width="1.2" fill="none"/><path d="M8 11L11 14.5L12.5 11Z" fill="#802020"/></svg>

<!-- TABLE -->
<div class="a" style="left:34px;top:349px;width:684px;height:220px;background:#fff;border:1px solid #c4c4bc;border-right-color:#dcdcd4;border-bottom-color:#d4d4cc"></div>
<div class="a" style="left:35px;top:350px;width:682px;height:75px;background:#e9e5da;border-bottom:1px solid #c4c0b4"></div>
<div class="a" style="left:35px;top:425px;width:682px;height:84px;background:#f4f2fb;border-bottom:1px solid #cfcfcf"></div>
<!-- vertical col lines -->
<div class="a" style="left:61px;top:350px;width:1px;height:159px;background:#cfcbc0"></div>
<div class="a" style="left:86px;top:350px;width:1px;height:159px;background:#cfcbc0"></div>
<div class="a" style="left:273px;top:350px;width:1px;height:159px;background:#cfcbc0"></div>
<div class="a" style="left:438px;top:350px;width:1px;height:159px;background:#cfcbc0"></div>
<div class="a" style="left:506px;top:350px;width:1px;height:159px;background:#cfcbc0"></div>
<div class="a" style="left:574px;top:350px;width:1px;height:159px;background:#cfcbc0"></div>
<div class="a" style="left:664px;top:350px;width:1px;height:159px;background:#cfcbc0"></div>
<!-- horizontal header lines -->
<div class="a" style="left:87px;top:364px;width:351px;height:1px;background:#d6d2c6"></div>
<div class="a" style="left:87px;top:379px;width:351px;height:1px;background:#d6d2c6"></div>
<div class="a" style="left:87px;top:394px;width:351px;height:1px;background:#d6d2c6"></div>
<div class="a" style="left:87px;top:409px;width:351px;height:1px;background:#d6d2c6"></div>
<div class="a" style="left:439px;top:364px;width:135px;height:1px;background:#d6d2c6"></div>
<div class="a" style="left:439px;top:379px;width:135px;height:1px;background:#d6d2c6"></div>
<div class="a" style="left:665px;top:364px;width:52px;height:1px;background:#d6d2c6"></div>
<div class="a" style="left:665px;top:379px;width:52px;height:1px;background:#d6d2c6"></div>
<div class="a" style="left:665px;top:394px;width:52px;height:1px;background:#d6d2c6"></div>
<div class="a" style="left:665px;top:409px;width:52px;height:1px;background:#d6d2c6"></div>
<!-- header text -->
<div class="t" style="left:37px;top:351px">№</div>
<div class="t" style="left:63px;top:351px;letter-spacing:0.6px">КВД</div>
<div class="t" style="left:88px;top:351px">(Дт) КБК</div>
<div class="t" style="left:203px;top:351px">(Дт) Счет</div>
<div class="t" style="left:275px;top:351px">(Кт) КБК</div>
<div class="t" style="left:388px;top:351px">(Кт) Счет</div>
<div class="t" style="left:440px;top:351px">(Дт) Колич...</div>
<div class="t" style="left:508px;top:351px">(Кт) Количе...</div>
<div class="t" style="left:576px;top:351px">Сумма</div>
<div class="a" style="left:665px;top:350px;width:52px;height:75px;overflow:hidden">
<div class="t" style="left:1px;top:1px">Содержание</div>
<div class="t" style="left:1px;top:16px">№ журнала</div>
<div class="t" style="left:1px;top:31px">(Дт) Характер</div>
<div class="t" style="left:1px;top:46px">(Кт) Характер</div>
<div class="t" style="left:1px;top:59px">движения</div>
</div>
<div class="t" style="left:88px;top:366px">(Дт) Субконто 1</div>
<div class="t" style="left:88px;top:381px">(Дт) Субконто 2</div>
<div class="t" style="left:88px;top:396px">(Дт) Субконто 3</div>
<div class="t" style="left:88px;top:411px">(Дт) Субконто 4</div>
<div class="t" style="left:275px;top:366px">(Кт) Субконто 1</div>
<div class="t" style="left:275px;top:381px">(Кт) Субконто 2</div>
<div class="t" style="left:275px;top:396px">(Кт) Субконто 3</div>
<div class="t" style="left:275px;top:411px">(Кт) Субконто 4</div>
<div class="t" style="left:440px;top:366px">(Дт) Валюта</div>
<div class="t" style="left:508px;top:366px">(Кт) Валюта</div>
<div class="t" style="left:440px;top:381px">(Дт) Вал.</div>
<div class="t" style="left:440px;top:394px">сумма</div>
<div class="t" style="left:508px;top:381px">(Кт) Вал.</div>
<div class="t" style="left:508px;top:394px">сумма</div>
<!-- data -->
<div class="t" style="left:53px;top:427px">1</div>
<div class="t" style="left:71px;top:427px">2</div>
<div class="t" style="left:89px;top:427px;letter-spacing:0.3px">0730000000000000</div>
<div class="t" style="left:89px;top:444px">510</div>
<div class="t" style="left:204px;top:427px">201.01</div>
<div class="t" style="left:389px;top:427px">000</div>
<div class="t" style="left:667px;top:444px">2</div>
<!-- scrollbar -->
<div class="a" style="left:35px;top:555px;width:682px;height:13px;background:#fdf9ef;border-top:1px solid #e8e6dc;border-right:1px solid #dcdcd4"></div>
<div class="a" style="left:48px;top:556px;width:600px;height:12px;background:linear-gradient(#ebe7dc,#e4dfd2);border:1px solid #dcd8c8"></div>
<div class="a" style="left:35px;top:556px;width:13px;height:12px;background:#eae4d9;border:1px solid #d4d0c4"></div>
<svg style="left:38px;top:558px" width="6" height="8"><path d="M5 0L1 4L5 8" fill="none" stroke="#000" stroke-width="1.1"/></svg>
<div class="a" style="left:704px;top:556px;width:13px;height:12px;background:#eae4d9;border:1px solid #d4d0c4"></div>
<svg style="left:708px;top:558px" width="6" height="8"><path d="M1 0L5 4L1 8" fill="none" stroke="#000" stroke-width="1.1"/></svg>

<!-- comment -->
<div class="a" style="left:133px;top:573px;width:585px;height:19px;background:#fff;border:1px solid #a5a290"></div>
<div class="t" style="left:136px;top:577px">ввод остатков</div>

<!-- bottom buttons -->
<div class="t" style="left:391px;top:607px">Бухгалтерская справка</div>
<div class="sep" style="left:519px;top:603px;height:20px"></div>
<div class="t" style="left:525px;top:607px">Печать</div>
<svg style="left:565px;top:612px" width="5" height="3"><path d="M0 0H5L2.5 3Z" fill="#000"/></svg>
<div class="sep" style="left:576px;top:603px;height:20px"></div>
<div class="t" style="left:583px;top:607px;font-weight:bold;font-size:12px;letter-spacing:-0.5px">OK</div>
<div class="sep" style="left:607px;top:603px;height:20px"></div>
<div class="t" style="left:615px;top:607px">Записать</div>
<div class="sep" style="left:669px;top:603px;height:20px"></div>
<div class="t" style="left:677px;top:607px">Закрыть</div>

<!-- MDI TABS -->
<div class="a" style="left:0;top:949px;width:1280px;height:45px;background:#eae4d9"></div>
<div class="a" style="left:0;top:949px;width:1280px;height:2px;background:#fcfbf8"></div>
<div class="a" style="left:2px;top:952px;width:171px;height:20px;background:#f6f6f8;border:1px solid #b8b8b0"></div>
<svg style="left:4px;top:955px" width="16" height="13"><path d="M1 8L6 2H12L15 8Z" fill="#f0f098"/><path d="M0.5 7.5H15.5V12.5H1.5Z" fill="#a8a860" stroke="#808040" stroke-width=".6"/><path d="M15 4V12" stroke="#707030" stroke-width="1"/></svg>
<div class="t" style="left:21px;top:956px;color:#a0a0a0">Документы Операция (бухг...</div>
<div class="a" style="left:174px;top:952px;width:172px;height:20px;background:#c8c8c8;border:1px solid #c0c0c0"></div>
<svg style="left:179px;top:955px" width="12" height="13"><rect x="0.5" y="0.5" width="11" height="12" fill="#f8fbff" stroke="#90a0b0" stroke-width=".6"/><path d="M2 2H10" stroke="#305878" stroke-width="1"/><path d="M2 4H10M6 7H10M6 9H10" stroke="#8aa0b8" stroke-width=".7"/><path d="M4 5L6.5 8L4 11L1.5 8Z" fill="none" stroke="#406890" stroke-width=".8"/></svg>
<div class="t" style="left:193px;top:956px">Операция (бухгалтерска...:04</div>
<!-- status bar -->
<div class="a" style="left:0;top:974px;width:1207px;height:19px;border:1px solid #d4d0c4"></div>
<div class="t" style="left:5px;top:978px">Для получения подсказки нажмите F1</div>
<div class="a" style="left:1212px;top:974px;width:29px;height:19px;border:1px solid #d4d0c4"></div>
<div class="t" style="left:1215px;top:977px;color:#707070">CAP</div>
<div class="a" style="left:1246px;top:974px;width:34px;height:19px;border:1px solid #d4d0c4"></div>
<div class="t" style="left:1249px;top:977px">NUM</div>

<!-- TASKBAR -->
<div class="a" style="left:0;top:994px;width:1280px;height:30px;background:linear-gradient(#787878 0,#787878 1px,#fbfbfd 1px,#f0f0f6 2px,#c8c8d8 3px,#9c9cb4 4px,#a4a8bc 9px,#b4bcc8 14px,#d8d8dc 19px,#e8e8ec 23px,#f0f0f4 27px,#c0c0cc 29px,#9898a8 30px)"></div>
<div class="a" style="left:0;top:994px;width:96px;height:30px;border-radius:0 14px 14px 0;background:linear-gradient(#2a8a2a 0,#4cb44c 2px,#8cd88c 5px,#a8e4a8 8px,#58bc58 11px,#3aa83a 16px,#34a034 22px,#2a902a 27px,#1e701e 30px);box-shadow:inset -3px 0 2px -1px #106810"></div>
<svg style="left:11px;top:1001px" width="18" height="17"><path d="M2 2Q5 0 8 2L7 8Q4 6 1 8Z" fill="#e05a20"/><path d="M9 2Q12 4 16 2L15 8Q12 10 8 8Z" fill="#40a020"/><path d="M1 9Q4 7 7 9L6 15Q3 13 0 15Z" fill="#2080e0"/><path d="M8 9Q11 11 15 9L14 15Q11 17 7 15Z" fill="#f8c020"/></svg>
<div class="t" style="left:34px;top:999px;font-size:17px;line-height:20px;font-weight:bold;font-style:italic;color:#fff;text-shadow:1px 1px 1px #205020">пуск</div>
<!-- quick launch -->
<svg style="left:108px;top:1000px" width="17" height="17"><defs><radialGradient id="ie" cx="40%" cy="35%" r="70%"><stop offset="0" stop-color="#9ee8ff"/><stop offset=".5" stop-color="#2aa0e0"/><stop offset="1" stop-color="#1060b0"/></radialGradient></defs><circle cx="9" cy="9" r="6.5" fill="url(#ie)"/><path d="M5 9.5H13M5.5 9.5Q6 5.5 9 5.5Q12 5.5 12.5 8.5" stroke="#fff" stroke-width="1.6" fill="none"/><path d="M6 12Q8 13.5 12 12" stroke="#fff" stroke-width="1.4" fill="none"/><path d="M1.5 16Q-1 11 6 5Q12 0 15.5 1.5" fill="none" stroke="#e8b830" stroke-width="1.5"/></svg>
<svg style="left:131px;top:1002px" width="17" height="14"><defs><linearGradient id="nb" x1="0" x2="1"><stop offset="0" stop-color="#2030d0"/><stop offset="1" stop-color="#5878f0"/></linearGradient></defs><rect x="0" y="0" width="12" height="13" fill="url(#nb)"/><path d="M2 12V3L9 12V3" stroke="#10187a" stroke-width="1.6" fill="none"/><rect x="12" y="0" width="3.5" height="13" fill="#182060"/><path d="M13.7 2V11" stroke="#e0e0f0" stroke-width="1" stroke-dasharray="1.5 1.5"/></svg>
<svg style="left:154px;top:1001px" width="16" height="16"><defs><radialGradient id="nr" cx="50%" cy="70%" r="60%"><stop offset="0" stop-color="#ffd040"/><stop offset=".45" stop-color="#f06010"/><stop offset="1" stop-color="#901010"/></radialGradient></defs><circle cx="8" cy="8" r="7.5" fill="#f4e0e0" stroke="#c83030" stroke-width=".8"/><circle cx="8" cy="8" r="6" fill="url(#nr)"/><path d="M4 11Q5 6 8 4Q7 8 10 7Q12 9 11 12Z" fill="#ffb020" opacity=".8"/></svg>
<svg style="left:176px;top:1000px" width="17" height="17"><defs><radialGradient id="ff" cx="55%" cy="40%" r="60%"><stop offset="0" stop-color="#5090e0"/><stop offset="1" stop-color="#203890"/></radialGradient></defs><circle cx="8.5" cy="8.5" r="8" fill="#e86a10"/><circle cx="9.5" cy="7.5" r="5" fill="url(#ff)"/><path d="M1.5 6Q4 1 10 1.5Q6 3 5.5 7Q6 12 11 12.5Q14 12.5 16 10Q14 16 8 16Q2 15 1.5 9Z" fill="#f49020"/><path d="M3 10Q5 14 10 14" stroke="#ffc040" stroke-width="1" fill="none"/></svg>
<svg style="left:199px;top:1000px" width="17" height="17"><defs><radialGradient id="bg" cx="50%" cy="40%" r="60%"><stop offset="0" stop-color="#d8e8f4"/><stop offset="1" stop-color="#7898b8"/></radialGradient></defs><circle cx="8.5" cy="8.5" r="7.5" fill="url(#bg)" stroke="#8090a8" stroke-width=".8"/><path d="M3 10Q8.5 5 14 10" stroke="#3868a8" stroke-width="1.6" fill="none"/><path d="M5 12H12" stroke="#5080b8" stroke-width="1"/></svg>
<!-- task buttons -->
<div class="a" style="left:262px;top:998px;width:157px;height:24px;border-radius:3px;background:linear-gradient(#ffffff,#f8f8fa 50%,#ececf2);border:1px solid #a8a8b8"></div>
<svg style="left:270px;top:1001px" width="17" height="17"><rect x="1" y="0" width="14" height="12" fill="#101010" stroke="#606060"/><rect x="3" y="2" width="10" height="8" fill="#102010"/><path d="M5 4V7" stroke="#e0e020"/><rect x="0" y="13" width="16" height="3" fill="#c0c0c0" stroke="#505050" stroke-width=".6"/></svg>
<div class="a" style="left:421px;top:998px;width:159px;height:24px;border-radius:3px;background:linear-gradient(#5c6878,#768090 30%,#84909c);border:1px solid #4c5664"></div>
<svg style="left:431px;top:1001px" width="17" height="17"><rect x="0" y="0" width="17" height="17" fill="#f8ee18"/><path d="M3 4.5L5 3V9" stroke="#c82808" stroke-width="1.8" fill="none"/><path d="M13 3.5H9.5Q7.5 3.5 7.5 6Q7.5 8.5 9.5 8.5H14" stroke="#d82808" stroke-width="1.8" fill="none"/><text x="3.5" y="16" font-size="7.5" fill="#3a3808" font-family="Liberation Sans">V8</text></svg>
<div class="t" style="left:451px;top:1004px;color:#fff">1С:Предприятие -&nbsp; ...</div>
<div class="a" style="left:582px;top:998px;width:157px;height:24px;border-radius:3px;background:linear-gradient(#ffffff,#f8f8fa 50%,#ececf2);border:1px solid #a8a8b8"></div>
<svg style="left:590px;top:1001px" width="17" height="17"><path d="M3.5 0.5H13L16.5 4V16.5H3.5Z" fill="#fff" stroke="#5070a0"/><rect x="0" y="3" width="10" height="10" fill="#2850b0"/><path d="M1.5 5L3 11L5 7L7 11L8.5 5" stroke="#fff" stroke-width="1" fill="none"/><path d="M11 7H15M11 9H15M11 11H15" stroke="#7090c0" stroke-width=".8"/></svg>
<div class="t" style="left:610px;top:1004px">Документ1 - Microso...</div>
<!-- tray -->
<div class="a" style="left:1150px;top:994px;width:130px;height:30px;background:linear-gradient(#fdfdff 0,#f4f4fa 4px,#ececf2 12px,#e4e4ec 22px,#d8d8e4 28px,#a8a8b8 30px);border-left:1px solid #9898b0"></div>
<div class="t" style="left:1124px;top:1003px">RL</div>
<div class="a" style="left:1141px;top:1001px;width:17px;height:17px;border-radius:50%;background:radial-gradient(circle at 45% 40%,#f0f0f8,#a8a8c0 55%,#7878a0);border:1px solid #707090"></div>
<svg style="left:1145px;top:1005px" width="9" height="9"><path d="M6 0.5L2.5 4.5L6 8.5" stroke="#fff" stroke-width="2.2" fill="none"/></svg>
<svg style="left:1161px;top:1001px" width="17" height="16"><rect x="5.5" y="0.5" width="10" height="8" fill="#3c78d8" stroke="#1a3c80"/><rect x="7" y="2" width="7" height="5" fill="#70b0f8"/><rect x="0.5" y="4.5" width="10" height="8" fill="#3068c8" stroke="#1a3c80"/><rect x="2" y="6" width="7" height="5" fill="#60a0f0"/><rect x="3" y="13" width="5" height="2" fill="#405080"/></svg>
<div class="a" style="left:1179px;top:1001px;width:17px;height:16px;background:#e01818;border:1px solid #f8d0d0"></div>
<svg style="left:1181px;top:1003px" width="13" height="12"><path d="M2 11Q2 2 7 2Q11 2 11 7Q11 11 7 11" stroke="#fff" stroke-width="1.8" fill="none"/><path d="M6 6L11 11" stroke="#fff" stroke-width="1.6"/></svg>
<svg style="left:1198px;top:1000px" width="17" height="17"><path d="M1 2L12 1V15L1 16Z" fill="#2868c8" stroke="#103070"/><path d="M12 1L15.5 3V14L12 15" fill="#103888" stroke="#103070" stroke-width=".6"/><path d="M3 5H10M3 8H10M3 11H10" stroke="#90c0f8" stroke-width=".8" stroke-dasharray="1 1"/></svg>
<div class="t" style="left:1223px;top:1001px;font-size:16px;line-height:18px;font-weight:bold;color:#0a1e8a;letter-spacing:1px;-webkit-text-stroke:1px #0a1e8a">08</div>
<div class="t" style="left:1248px;top:999px;font-size:11px;line-height:12px;font-weight:bold;color:#0a1e8a;letter-spacing:0.5px;-webkit-text-stroke:0.6px #0a1e8a">44</div>
<div class="t" style="left:1250px;top:1011px;font-size:10px;line-height:11px;font-weight:bold;font-style:italic;color:#0a1e8a;-webkit-text-stroke:0.5px #0a1e8a">Ср</div>
</body></html>
